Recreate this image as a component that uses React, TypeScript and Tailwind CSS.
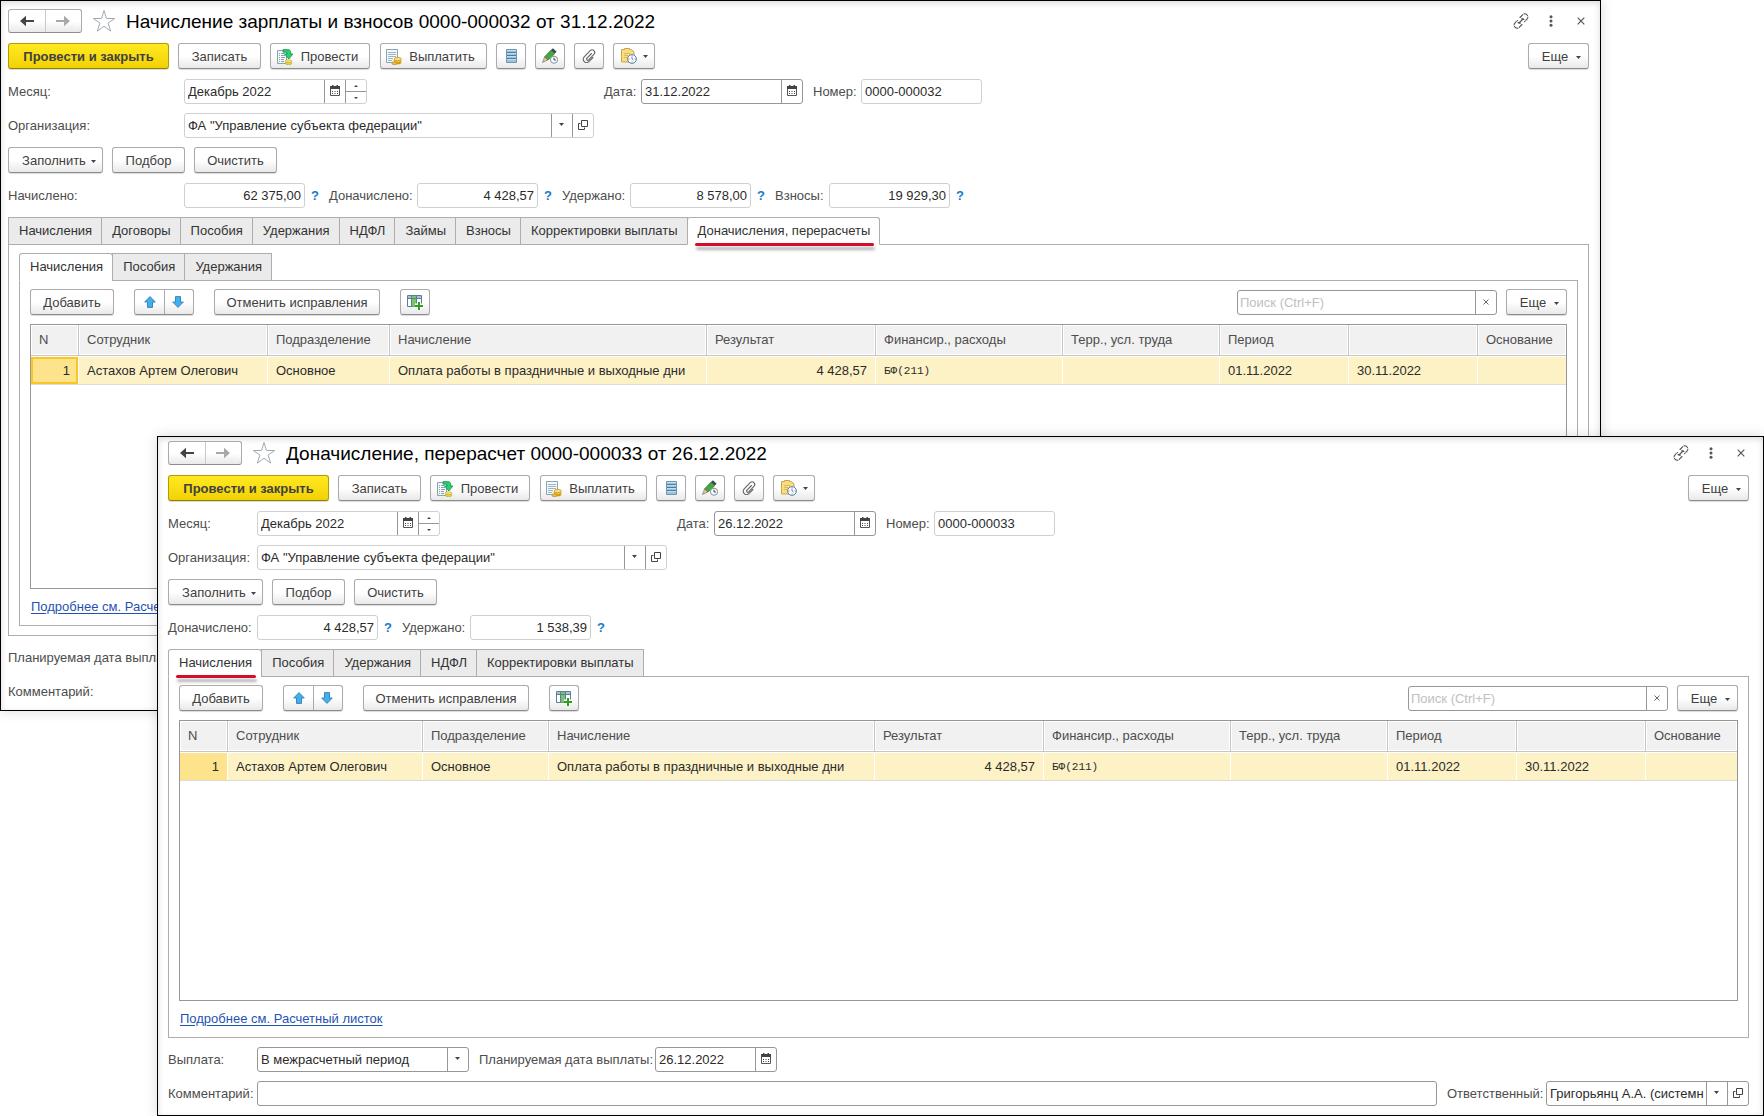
import { useId, useState } from 'react'
import type { ReactNode } from 'react'
import clsx from 'clsx'

interface Row {
  n: number
  employee: string
  department: string
  accrual: string
  result: string
  finance: string
  from: string
  to: string
}

const rows: Row[] = [
  {
    n: 1,
    employee: 'Астахов Артем Олегович',
    department: 'Основное',
    accrual: 'Оплата работы в праздничные и выходные дни',
    result: '4 428,57',
    finance: 'БФ(211)',
    from: '01.11.2022',
    to: '30.11.2022',
  },
]

const headers = [
  'N',
  'Сотрудник',
  'Подразделение',
  'Начисление',
  'Результат',
  'Финансир., расходы',
  'Терр., усл. труда',
  'Период',
  '',
  'Основание',
]

/* ---------- icons ---------- */

function ArrowIcon({ className }: { className?: string }) {
  return (
    <svg width="14" height="12" viewBox="0 0 14 12" className={className} aria-hidden="true">
      <path d="M0 6 6 .8V5h8v2H6v4.200z" fill="currentColor" />
    </svg>
  )
}

function StarIcon() {
  return (
    <svg width="24" height="24" viewBox="0 0 24 24" aria-hidden="true">
      <path
        d="M12 1.500l2.500 8h8.200l-6.600 4.600 2.500 8L12 17.200l-6.600 4.900 2.500-8L1.300 9.500h8.200z"
        fill="#fff"
        stroke="#a3a9ae"
      />
    </svg>
  )
}

function LinkIcon() {
  return (
    <svg width="16" height="16" viewBox="0 0 16 16" fill="none" stroke="#555" strokeWidth="1.100" strokeLinecap="round" aria-hidden="true">
      <path d="M7 4.500l2.600-2.700a2.900 2.900 0 0 1 4.400 0 3 3 0 0 1 0 4.300L11.500 8.700" strokeDasharray="4 1.500" />
      <path d="M11 6.500a3 3 0 0 0-2.400-.6M5 9.500a3 3 0 0 0 2.400.6" />
      <path d="M9 11.500l-2.600 2.700a2.900 2.900 0 0 1-4.400 0 3 3 0 0 1 0-4.300L4.500 7.300" strokeDasharray="4 1.500" />
      <path d="M6 10l4-4" />
    </svg>
  )
}

function DotsIcon() {
  return (
    <svg width="4" height="12" viewBox="0 0 4 12" fill="#555" aria-hidden="true">
      <circle cx="2" cy="1.700" r="1.500" />
      <circle cx="2" cy="6" r="1.500" />
      <circle cx="2" cy="10.300" r="1.500" />
    </svg>
  )
}

function CrossIcon({ size = 8 }: { size?: number }) {
  return (
    <svg width={size} height={size} viewBox="0 0 8 8" stroke="#555" strokeWidth="1.200" aria-hidden="true">
      <path d="M.7.7l6.600 6.600M7.300.7L.7 7.300" />
    </svg>
  )
}

function Caret() {
  return (
    <svg width="5" height="3" viewBox="0 0 5 3" fill="#444" aria-hidden="true">
      <path d="M0 0h5L2.500 3z" />
    </svg>
  )
}

function TinyCaret({ up = false }: { up?: boolean }) {
  return (
    <svg width="4" height="2" viewBox="0 0 4 2" fill="#444" className={up ? 'rotate-180' : undefined} aria-hidden="true">
      <path d="M0 0h4L2 2z" />
    </svg>
  )
}

function CalendarIcon() {
  return (
    <svg width="10" height="11" viewBox="0 0 10 11" aria-hidden="true">
      <path d="M.5 2.500h9v8h-9z" fill="#fff" stroke="#555" />
      <path d="M0 1h10v3H0zM2 0h1.500v2H2zM6.500 0H8v2H6.500z" fill="#444" />
      <path d="M2 6.500h6M2 8.500h6" stroke="#444" strokeDasharray="1 1.500" />
    </svg>
  )
}

function OpenIcon() {
  return (
    <svg width="10" height="10" viewBox="0 0 10 10" fill="none" stroke="#444" aria-hidden="true">
      <path d="M3.500.5h6v6h-6zM2.500 3.500h-2v6h6v-2" />
    </svg>
  )
}

function PostIcon() {
  return (
    <svg width="16" height="16" viewBox="0 0 16 16" aria-hidden="true">
      <path d="M.5 1.500h9v13h-9z" fill="#f3f8fb" stroke="#8ba2b1" />
      <path d="M2 4.500h1M4 4.500h4M2 6.500h1M4 6.500h4M2 8.500h1M4 8.500h4M2 10.500h1M4 10.500h3M2 12.500h1M4 12.500h3" stroke="#8ba2b1" />
      <path d="M6 .6h4.500c2.200 0 3.300 1 3.300 3.200V5H16l-4.200 5L7.600 5h2.600v-.6c0-.9-.4-1.200-1.200-1.200H6z" fill="#25d070" stroke="#128543" strokeWidth=".7" />
      <g stroke="#b9a018" strokeWidth=".6">
        <ellipse cx="11.500" cy="14.200" rx="3.400" ry="1.400" fill="#ecd04a" />
        <ellipse cx="11.500" cy="12.200" rx="3.400" ry="1.400" fill="#f9e87c" />
      </g>
    </svg>
  )
}

function PayIcon() {
  return (
    <svg width="16" height="16" viewBox="0 0 16 16" aria-hidden="true">
      <path d="M.5.5h11v13H.5z" fill="#f3f8fb" stroke="#8ba2b1" />
      <path d="M2 3.500h8M2 5.500h8M2 7.500h8M2 9.500h5M2 11.500h4" stroke="#9bb3c3" />
      <g stroke="#b9810f" strokeWidth=".6">
        <ellipse cx="11.500" cy="13.400" rx="3.600" ry="1.600" fill="#e9a825" />
        <ellipse cx="11.500" cy="11.800" rx="3.600" ry="1.600" fill="#f7cf52" />
        <ellipse cx="11.800" cy="10" rx="3.600" ry="1.700" fill="#ffdf6e" />
        <ellipse cx="8.500" cy="14.200" rx="2.600" ry="1.500" fill="#f2ba3a" />
      </g>
    </svg>
  )
}

function RegisterIcon() {
  return (
    <svg width="11" height="14" viewBox="0 0 11 14" aria-hidden="true">
      <path d="M.5.5h10v13H.5z" fill="#9cc3dd" stroke="#6f97b3" />
      <path d="M1 3.500h9M1 6.500h9M1 9.500h9" stroke="#4e7d9c" />
      <path d="M1 1.500h9M1 4.500h9M1 7.500h9M1 10.500h9" stroke="#c3dded" />
    </svg>
  )
}

function PenClockIcon() {
  return (
    <svg width="16" height="16" viewBox="0 0 16 16" aria-hidden="true">
      <path d="M9 2 12.800 5.600 6 12 2.500 9z" fill="#46a545" stroke="#2c7230" strokeWidth=".7" />
      <path d="M9 2 11 .3l3.600 3.500-1.800 1.800z" fill="#3c4a52" />
      <path d="M2.500 9 6 12 .5 14.500z" fill="#e8c58c" stroke="#555" strokeWidth=".5" />
      <circle cx="12" cy="11.700" r="3.600" fill="#fff" stroke="#7593a8" />
      <path d="M12 9.500V12h2" fill="none" stroke="#444" />
    </svg>
  )
}

function ClipIcon() {
  return (
    <svg width="14" height="14" viewBox="0 0 14 14" fill="none" stroke="#666" strokeWidth="1.100" strokeLinecap="round" aria-hidden="true">
      <path d="M9.500 4.500 5 9.200a1.200 1.200 0 0 0 1.700 1.700l5.200-5.500a2.600 2.600 0 0 0-3.700-3.700L2.200 7.900a3.300 3.300 0 0 0 4.700 4.700L11 8.500" />
    </svg>
  )
}

function NoteClockIcon() {
  return (
    <svg width="16" height="16" viewBox="0 0 16 16" aria-hidden="true">
      <path d="M.5 1.500h3v-1h5v1h2L13 4v10H.5z" fill="#f7dc80" stroke="#cfa443" />
      <path d="M3 5.500h6M3 7.500h4M3 9.500h3" stroke="#dfbb5c" />
      <circle cx="11" cy="11" r="4.400" fill="#fff" stroke="#4b83b5" />
      <path d="M11 7.500v1M11 13.500v1M7.500 11h1M13.500 11h1" stroke="#d8443a" />
      <path d="M11 9v2l1.500 1" fill="none" stroke="#3a6ea5" strokeWidth=".8" />
    </svg>
  )
}

function MoveIcon({ down = false }: { down?: boolean }) {
  return (
    <svg width="12" height="12" viewBox="0 0 12 12" className={down ? 'rotate-180' : undefined} aria-hidden="true">
      <path d="M6 .6 11.300 6H8.500v5.400h-5V6H.7z" fill="#43b0ee" stroke="#2f7fb0" strokeWidth=".9" />
    </svg>
  )
}

function ColumnsIcon() {
  return (
    <svg width="16" height="15" viewBox="0 0 16 15" aria-hidden="true">
      <path d="M.5.5h14v11H.5z" fill="#fff" stroke="#5b7f99" />
      <path d="M1 1h13v2H1z" fill="#a9c4d6" />
      <path d="M5 1h4v10.500H5z" fill="#7cc36a" />
      <path d="M1 3.500h13M4.500 1v10M9.500 1v10" stroke="#5b7f99" />
      <path d="M12 6v9M8 10.500h8" stroke="#fff" strokeWidth="4" />
      <path d="M12 7v8M8 11h8" stroke="#2f9e1f" strokeWidth="2" />
    </svg>
  )
}

/* ---------- controls ---------- */

const buttonBase =
  'flex h-[26px] shrink-0 items-center justify-center rounded-[3px] border whitespace-nowrap shadow-[0_1px_1px_rgba(0,0,0,0.15)]'
const grayButton =
  'border-[#ababab] border-b-[#8c8c8c] bg-linear-to-b from-white from-50% to-[#e9e9e9] text-[#404040]'

interface ButtonProps {
  children: ReactNode
  className?: string
  label?: string
  primary?: boolean
}

function Button({ children, className, label, primary }: ButtonProps) {
  return (
    <button
      type="button"
      aria-label={label}
      className={clsx(
        buttonBase,
        primary
          ? 'border-[#b39b00] border-b-[#8f7c00] bg-linear-to-b from-[#ffe920] to-[#f2d200] font-bold text-[#404040]'
          : grayButton,
        !label && 'pt-[2px]',
        className,
      )}
    >
      {children}
    </button>
  )
}

function MoreButton() {
  return (
    <Button className="w-[61px] gap-[8px] pl-[6px]">
      Еще
      <Caret />
    </Button>
  )
}

interface FieldProps {
  label: string
  value: string
  labelClass?: string
  boxClass: string
  dark?: boolean
  right?: boolean
  children?: ReactNode
}

// Text box with optional buttons attached on its right side
function Field({ label, value, labelClass, boxClass, dark, right, children }: FieldProps) {
  const id = useId()
  return (
    <>
      <label htmlFor={id} className={clsx('shrink-0 whitespace-nowrap', labelClass)}>
        {label}
      </label>
      <div
        className={clsx(
          'flex h-[25px] overflow-hidden rounded-[3px] border bg-white',
          dark ? 'border-[#979797]' : 'border-[#d0d0d0]',
          boxClass,
        )}
      >
        <input
          id={id}
          defaultValue={value}
          className={clsx('w-0 min-w-0 grow px-[3px] text-[#2b2b2b] outline-none', right && 'text-right')}
        />
        {children}
      </div>
    </>
  )
}

function BoxButton({ label, children }: { label: string; children: ReactNode }) {
  return (
    <button
      type="button"
      aria-label={label}
      className="flex w-[21px] shrink-0 items-center justify-center border-l border-[#979797] pr-px pb-[2px]"
    >
      {children}
    </button>
  )
}

function Spinner() {
  return (
    <div className="flex w-[21px] shrink-0 flex-col border-l border-[#979797]">
      <button type="button" aria-label="Следующий месяц" className="flex h-[12px] items-center justify-center border-b border-[#979797] pr-px">
        <TinyCaret up />
      </button>
      <button type="button" aria-label="Предыдущий месяц" className="flex grow items-center justify-center pr-px">
        <TinyCaret />
      </button>
    </div>
  )
}

interface PickerProps {
  label: string
  value: string
  labelClass?: string
  boxClass: string
  dark?: boolean
  openable?: boolean
}

function Picker({ label, value, labelClass, boxClass, dark, openable }: PickerProps) {
  const id = useId()
  return (
    <>
      <label htmlFor={id} className={clsx('shrink-0 whitespace-nowrap', labelClass)}>
        {label}
      </label>
      <div
        className={clsx(
          'flex h-[25px] shrink-0 overflow-hidden rounded-[3px] border bg-white',
          dark ? 'border-[#979797]' : 'border-[#d0d0d0]',
          boxClass,
        )}
      >
        <div className="relative flex min-w-0 grow">
          <select id={id} className="w-full appearance-none pr-[22px] pl-[3px] text-[#2b2b2b] outline-none">
            <option>{value}</option>
          </select>
          <span className="pointer-events-none absolute inset-y-0 right-0 flex w-[21px] items-center justify-center border-l border-[#979797] pr-px pb-[2px]">
            <Caret />
          </span>
        </div>
        {openable && (
          <BoxButton label="Открыть">
            <OpenIcon />
          </BoxButton>
        )}
      </div>
    </>
  )
}

function Total({ label, value, labelClass }: { label: string; value: string; labelClass?: string }) {
  return (
    <>
      <Field label={label} value={value} labelClass={labelClass} boxClass="w-[121px] shrink-0" right />
      <button type="button" aria-label={`Справка: ${label}`} className="w-[24px] shrink-0 pr-[4px] text-center font-bold text-[#1a7cc4]">
        ?
      </button>
    </>
  )
}

interface TabsProps {
  tabs: string[]
  initial: string
  marked?: boolean
}

function Tabs({ tabs, initial, marked }: TabsProps) {
  const [active, setActive] = useState(initial)
  return (
    <div role="tablist" className="-mb-px flex">
      {tabs.map((tab, i) => (
        <button
          key={tab}
          type="button"
          role="tab"
          aria-selected={tab === active}
          onClick={() => setActive(tab)}
          className={clsx(
            'relative h-[28px] border border-[#adadad] pr-[9px] pl-[10px] whitespace-nowrap text-[#333]',
            i > 0 && '-ml-px',
            tab === active ? 'rounded-t-[3px] border-b-white bg-white' : 'bg-[#ebebeb]',
          )}
        >
          {tab}
          {marked && tab === active && (
            <span className="absolute right-[5px] -bottom-[2px] left-[7px] h-[3px] rounded-full bg-[#d40d2a] shadow-[1px_4px_3px_rgba(0,0,0,0.3)]" />
          )}
        </button>
      ))}
    </div>
  )
}

/* ---------- document parts ---------- */

function TitleBar({ title }: { title: string }) {
  return (
    <header className="flex h-[24px] items-center">
      <div className="flex h-[24px] w-[74px] shrink-0 rounded-[3px] border border-[#ababab] border-b-[#8c8c8c] bg-linear-to-b from-white from-50% to-[#e9e9e9]">
        <button type="button" aria-label="Назад" className="flex grow items-center justify-center border-r border-[#c8c8c8] text-[#444]">
          <ArrowIcon />
        </button>
        <button type="button" aria-label="Вперед" className="flex grow items-center justify-center text-[#a8a8a8]">
          <ArrowIcon className="rotate-180" />
        </button>
      </div>
      <button type="button" aria-label="В избранное" className="ml-[10px] shrink-0">
        <StarIcon />
      </button>
      <h1 className="ml-[10px] grow truncate pt-[2px] text-[19px] leading-[24px] text-black">{title}</h1>
      <div className="flex shrink-0 items-center pr-[4px]">
        <button type="button" aria-label="Получить ссылку">
          <LinkIcon />
        </button>
        <button type="button" aria-label="Меню" className="ml-[20px]">
          <DotsIcon />
        </button>
        <button type="button" aria-label="Закрыть" className="ml-[24px]">
          <CrossIcon />
        </button>
      </div>
    </header>
  )
}

function CommandBar() {
  return (
    <div className="mt-[10px] flex">
      <Button primary className="w-[161px]">
        Провести и закрыть
      </Button>
      <Button className="ml-[9px] w-[83px]">Записать</Button>
      <Button className="ml-[9px] w-[100px] gap-[8px] pr-[5px]">
        <PostIcon />
        Провести
      </Button>
      <Button className="ml-[10px] w-[107px] gap-[7px] pr-[6px]">
        <PayIcon />
        Выплатить
      </Button>
      <Button label="Реестр" className="ml-[9px] w-[30px]">
        <RegisterIcon />
      </Button>
      <Button label="Напоминание" className="ml-[9px] w-[30px]">
        <PenClockIcon />
      </Button>
      <Button label="Присоединенные файлы" className="ml-[9px] w-[30px]">
        <ClipIcon />
      </Button>
      <Button label="Задачи" className="ml-[9px] w-[42px] gap-[6px]">
        <NoteClockIcon />
        <Caret />
      </Button>
      <div className="ml-auto">
        <MoreButton />
      </div>
    </div>
  )
}

interface DocumentFieldsProps {
  date: string
  number: string
  labelWidth: string
}

function DocumentFields({ date, number, labelWidth }: DocumentFieldsProps) {
  return (
    <>
      <div className="mt-[10px] flex items-center">
        <Field label="Месяц:" value="Декабрь 2022" labelClass={labelWidth} boxClass="w-[183px] shrink-0">
          <BoxButton label="Выбрать месяц">
            <CalendarIcon />
          </BoxButton>
          <Spinner />
        </Field>
        <Field label="Дата:" value={date} labelClass="ml-[237px] w-[37px]" boxClass="w-[162px] shrink-0" dark>
          <BoxButton label="Выбрать дату">
            <CalendarIcon />
          </BoxButton>
        </Field>
        <Field label="Номер:" value={number} labelClass="ml-[10px] w-[48px]" boxClass="w-[121px] shrink-0" />
      </div>
      <div className="mt-[9px] flex items-center">
        <Picker
          label="Организация:"
          value={'ФА "Управление субъекта федерации"'}
          labelClass={labelWidth}
          boxClass="w-[410px]"
          openable
        />
      </div>
      <div className="mt-[9px] flex gap-[9px]">
        <Button className="w-[95px] gap-[5px] pl-[7px]">
          Заполнить
          <Caret />
        </Button>
        <Button className="w-[73px]">Подбор</Button>
        <Button className="w-[83px]">Очистить</Button>
      </div>
    </>
  )
}

function TableCommands() {
  return (
    <div className="flex">
      <Button className="w-[84px]">Добавить</Button>
      <div className={clsx(buttonBase, grayButton, 'ml-[20px] w-[60px]')}>
        <button type="button" aria-label="Переместить вверх" className="flex h-full w-[30px] items-center justify-center border-r border-[#ababab]">
          <MoveIcon />
        </button>
        <button type="button" aria-label="Переместить вниз" className="flex h-full grow items-center justify-center pr-[2px]">
          <MoveIcon down />
        </button>
      </div>
      <Button className="ml-[20px] w-[166px]">Отменить исправления</Button>
      <Button label="Настроить колонки" className="ml-[20px] w-[30px]">
        <ColumnsIcon />
      </Button>
      <div className="mt-px ml-auto flex h-[25px] w-[260px] shrink-0 overflow-hidden rounded-[3px] border border-[#979797] bg-white">
        <input
          type="text"
          aria-label="Поиск"
          placeholder="Поиск (Ctrl+F)"
          className="w-0 grow px-[2px] outline-none placeholder:text-[#c0c0c0]"
        />
        <BoxButton label="Очистить поиск">
          <CrossIcon size={6} />
        </BoxButton>
      </div>
      <div className="ml-[9px]">
        <MoreButton />
      </div>
    </div>
  )
}

const cell = 'truncate border-t border-r border-white px-[8px] last:border-r-0'

function AccrualTable({ wide }: { wide?: boolean }) {
  return (
    <div className="mt-[9px] grow overflow-hidden border border-[#979797] bg-white">
      <table className="w-full table-fixed border-separate border-spacing-0">
        <colgroup>
          <col className="w-[48px]" />
          <col className={wide ? 'w-[195px]' : 'w-[189px]'} />
          <col className={wide ? 'w-[126px]' : 'w-[122px]'} />
          <col className={wide ? 'w-[326px]' : 'w-[317px]'} />
          <col className="w-[169px]" />
          <col className="w-[187px]" />
          <col className="w-[157px]" />
          <col className="w-[129px]" />
          <col className="w-[129px]" />
          <col />
        </colgroup>
        <thead>
          <tr className="h-[31px] bg-[#f1f1f1] text-left text-[#4d4d4d]">
            {headers.map((header, i) => (
              <th
                key={i}
                className="truncate border-r border-b border-[#c6c6c6] px-[8px] font-normal shadow-[inset_0_0_0_1px_#fff] last:border-r-0"
              >
                {header}
              </th>
            ))}
          </tr>
        </thead>
        <tbody>
          {rows.map(row => (
            <tr key={row.n} className="h-[28px] bg-[#fdf1c6] text-[#2b2b2b] shadow-[0_1px_0_#dcdcdc]">
              <td
                className={clsx(
                  'border-t border-r border-white bg-[#fde48c] bg-clip-padding px-[8px] text-right',
                  !wide && 'shadow-[inset_0_0_0_2px_#f9c623]',
                )}
              >
                {row.n}
              </td>
              <td className={cell}>{row.employee}</td>
              <td className={cell}>{row.department}</td>
              <td className={cell}>{row.accrual}</td>
              <td className={clsx(cell, 'text-right')}>{row.result}</td>
              <td className={clsx(cell, "font-['Liberation_Mono',monospace] text-[11px]")}>{row.finance}</td>
              <td className={cell} />
              <td className={cell}>{row.from}</td>
              <td className={cell}>{row.to}</td>
              <td className={cell} />
            </tr>
          ))}
        </tbody>
      </table>
    </div>
  )
}

function PayslipLink() {
  return (
    <div className="flex h-[36px] shrink-0 items-center px-px">
      <a href="#payslip" className="text-[#1f52b5] underline underline-offset-2">
        Подробнее см. Расчетный листок
      </a>
    </div>
  )
}

const windowFrame =
  "absolute flex flex-col overflow-hidden border border-black bg-white font-['Liberation_Sans',Arial,sans-serif] text-[13px] leading-[16px] text-[#4d4d4d] shadow-[0_0_12px_rgba(0,0,0,0.15),inset_0_2px_6px_rgba(0,0,0,0.15)]"

function PayrollWindow() {
  return (
    <section className={clsx(windowFrame, 'top-0 right-[163px] left-0 h-[711px] pt-[8px] pr-[11px] pb-[6px] pl-[7px]')}>
      <TitleBar title="Начисление зарплаты и взносов 0000-000032 от 31.12.2022" />
      <CommandBar />
      <DocumentFields date="31.12.2022" number="0000-000032" labelWidth="w-[176px]" />
      <div className="mt-[10px] mb-[9px] flex items-center">
        <Total label="Начислено:" value="62 375,00" labelClass="w-[176px]" />
        <Total label="Доначислено:" value="4 428,57" labelClass="w-[88px]" />
        <Total label="Удержано:" value="8 578,00" labelClass="w-[68px]" />
        <Total label="Взносы:" value="19 929,30" labelClass="w-[54px]" />
      </div>
      <Tabs
        tabs={[
          'Начисления',
          'Договоры',
          'Пособия',
          'Удержания',
          'НДФЛ',
          'Займы',
          'Взносы',
          'Корректировки выплаты',
          'Доначисления, перерасчеты',
        ]}
        initial="Доначисления, перерасчеты"
        marked
      />
      <div className="flex grow flex-col border border-[#adadad] px-[10px] pt-[8px] pb-[9px]">
        <Tabs tabs={['Начисления', 'Пособия', 'Удержания']} initial="Начисления" />
        <div className="flex grow flex-col border border-[#adadad] px-[10px] pt-[8px]">
          <TableCommands />
          <AccrualTable />
          <PayslipLink />
        </div>
      </div>
      <div className="mt-[9px] flex items-center">
        <Field label="Планируемая дата выплаты:" value="" labelClass="w-[176px]" boxClass="w-[122px] shrink-0" dark />
      </div>
      <div className="mt-[9px] flex items-center">
        <Field label="Комментарий:" value="" labelClass="w-[176px]" boxClass="grow" dark />
      </div>
    </section>
  )
}

function RecalculationWindow() {
  return (
    <section className={clsx(windowFrame, 'top-[436px] right-0 bottom-0 left-[157px] pt-[4px] pr-[14px] pb-[9px] pl-[10px]')}>
      <TitleBar title="Доначисление, перерасчет 0000-000033 от 26.12.2022" />
      <CommandBar />
      <DocumentFields date="26.12.2022" number="0000-000033" labelWidth="w-[89px]" />
      <div className="mt-[10px] mb-[9px] flex items-center">
        <Total label="Доначислено:" value="4 428,57" labelClass="w-[89px]" />
        <Total label="Удержано:" value="1 538,39" labelClass="w-[68px]" />
      </div>
      <Tabs
        tabs={['Начисления', 'Пособия', 'Удержания', 'НДФЛ', 'Корректировки выплаты']}
        initial="Начисления"
        marked
      />
      <div className="flex grow flex-col border border-[#adadad] px-[10px] pt-[8px]">
        <TableCommands />
        <AccrualTable wide />
        <PayslipLink />
      </div>
      <div className="mt-[9px] flex items-center">
        <Picker label="Выплата:" value="В межрасчетный период" labelClass="w-[89px]" boxClass="w-[212px]" dark />
        <Field
          label="Планируемая дата выплаты:"
          value="26.12.2022"
          labelClass="ml-[10px] w-[176px]"
          boxClass="w-[122px] shrink-0"
          dark
        >
          <BoxButton label="Выбрать дату">
            <CalendarIcon />
          </BoxButton>
        </Field>
      </div>
      <div className="mt-[9px] flex items-center">
        <Field label="Комментарий:" value="" labelClass="w-[89px]" boxClass="grow" dark />
        <Picker
          label="Ответственный:"
          value="Григорьянц А.А. (системн"
          labelClass="ml-[10px] w-[99px]"
          boxClass="w-[203px]"
          dark
          openable
        />
      </div>
    </section>
  )
}

export default function App() {
  return (
    <main className="relative h-screen min-h-[960px] min-w-[1280px] overflow-hidden bg-white">
      <PayrollWindow />
      <RecalculationWindow />
    </main>
  )
}
